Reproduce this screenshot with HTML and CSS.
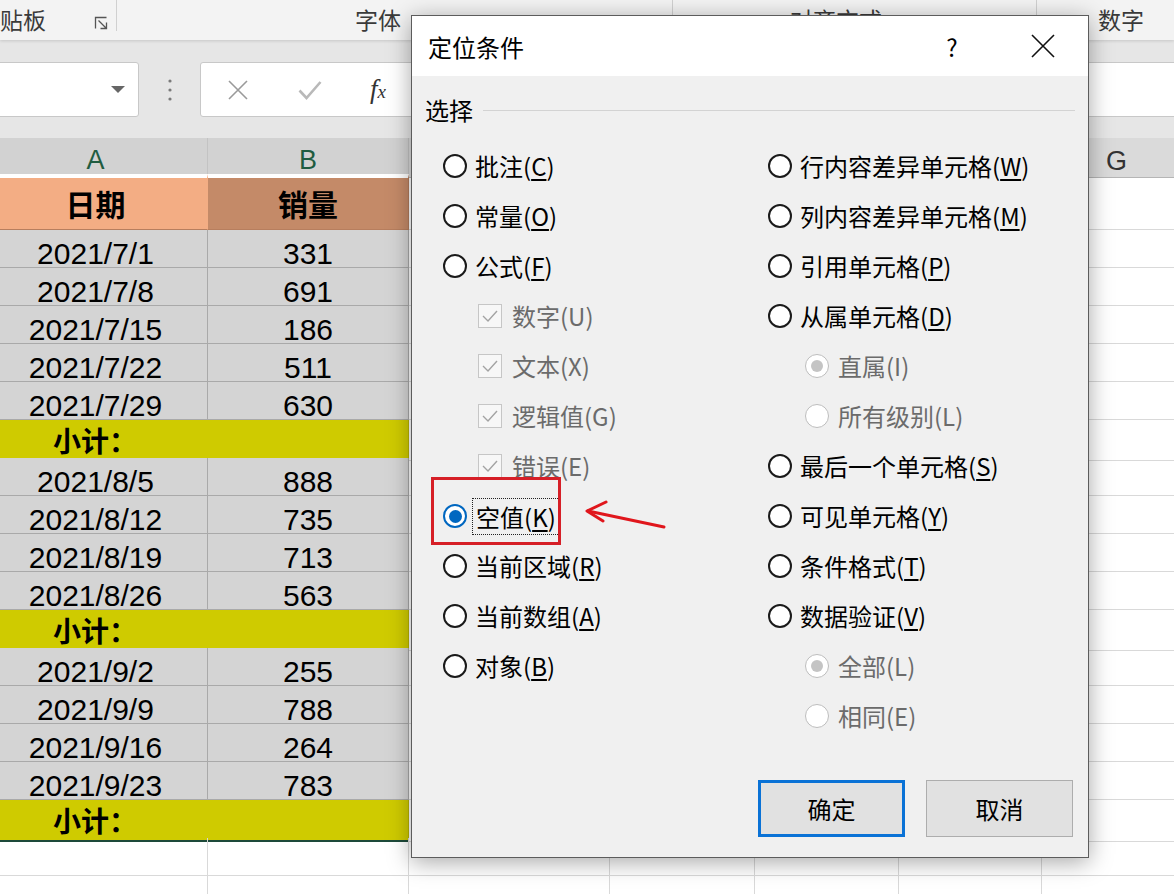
FILE: index.html
```html
<!DOCTYPE html>
<html lang="zh-CN">
<head>
<meta charset="utf-8">
<title>定位条件</title>
<link rel="stylesheet" href="styles.css">
</head>
<body>
<div class="ribbon">
  <div class="rgroup g-clip"><span class="rlabel">贴板</span>
    <svg class="launcher" width="14" height="14" viewBox="0 0 14 14"><path d="M1.5 12.5V1.5H12.5M4.5 4.5L12 12M6.5 12.5H12.5V6.5" fill="none" stroke="#555" stroke-width="1.3"/></svg>
  </div>
  <div class="rgroup g-font"><span class="rlabel">字体</span></div>
  <div class="rgroup g-align"><span class="rlabel">对齐方式</span></div>
  <div class="rgroup g-num"><span class="rlabel">数字</span></div>
</div>

<div class="fbar">
  <div class="namebox"><svg width="14" height="8" viewBox="0 0 14 8"><path d="M0 0H14L7 7Z" fill="#666"/></svg></div>
  <div class="vdots"><svg width="4" height="22" viewBox="0 0 4 22"><circle cx="2" cy="2" r="1.6" fill="#7a7a7a"/><circle cx="2" cy="11" r="1.6" fill="#7a7a7a"/><circle cx="2" cy="20" r="1.6" fill="#7a7a7a"/></svg></div>
  <div class="fbox">
    <svg class="ic-x" width="20" height="20" viewBox="0 0 20 20"><path d="M1 1L19 19M19 1L1 19" stroke="#9a9a9a" stroke-width="1.6"/></svg>
    <svg class="ic-ok" width="24" height="20" viewBox="0 0 24 20"><path d="M1.5 10.5L8.5 18L22.5 2" fill="none" stroke="#b9b9b9" stroke-width="2.6"/></svg>
    <span class="fx">f<span class="fx-x">x</span></span>
  </div>
</div>

<div class="colhead">
  <div class="ch sel">A</div>
  <div class="ch sel">B</div>
  <div class="ch"></div>
  <div class="ch"></div>
  <div class="ch"></div>
  <div class="ch"></div>
  <div class="ch">G</div>
</div>

<div class="sheet">
  <div class="row hdr"><div class="cell h1">日期</div><div class="cell h2">销量</div><div class="cell"></div><div class="cell"></div><div class="cell"></div><div class="cell"></div><div class="cell"></div></div>

  <div class="row"><div class="cell d num">2021/7/1</div><div class="cell d num">331</div><div class="cell"></div><div class="cell"></div><div class="cell"></div><div class="cell"></div><div class="cell"></div></div>
  <div class="row"><div class="cell d num">2021/7/8</div><div class="cell d num">691</div><div class="cell"></div><div class="cell"></div><div class="cell"></div><div class="cell"></div><div class="cell"></div></div>
  <div class="row"><div class="cell d num">2021/7/15</div><div class="cell d num">186</div><div class="cell"></div><div class="cell"></div><div class="cell"></div><div class="cell"></div><div class="cell"></div></div>
  <div class="row"><div class="cell d num">2021/7/22</div><div class="cell d num">511</div><div class="cell"></div><div class="cell"></div><div class="cell"></div><div class="cell"></div><div class="cell"></div></div>
  <div class="row"><div class="cell d num">2021/7/29</div><div class="cell d num">630</div><div class="cell"></div><div class="cell"></div><div class="cell"></div><div class="cell"></div><div class="cell"></div></div>
  <div class="row"><div class="cell sub">小计：</div><div class="cell"></div><div class="cell"></div><div class="cell"></div><div class="cell"></div><div class="cell"></div></div>

  <div class="row"><div class="cell d num">2021/8/5</div><div class="cell d num">888</div><div class="cell"></div><div class="cell"></div><div class="cell"></div><div class="cell"></div><div class="cell"></div></div>
  <div class="row"><div class="cell d num">2021/8/12</div><div class="cell d num">735</div><div class="cell"></div><div class="cell"></div><div class="cell"></div><div class="cell"></div><div class="cell"></div></div>
  <div class="row"><div class="cell d num">2021/8/19</div><div class="cell d num">713</div><div class="cell"></div><div class="cell"></div><div class="cell"></div><div class="cell"></div><div class="cell"></div></div>
  <div class="row"><div class="cell d num">2021/8/26</div><div class="cell d num">563</div><div class="cell"></div><div class="cell"></div><div class="cell"></div><div class="cell"></div><div class="cell"></div></div>
  <div class="row"><div class="cell sub">小计：</div><div class="cell"></div><div class="cell"></div><div class="cell"></div><div class="cell"></div><div class="cell"></div></div>

  <div class="row"><div class="cell d num">2021/9/2</div><div class="cell d num">255</div><div class="cell"></div><div class="cell"></div><div class="cell"></div><div class="cell"></div><div class="cell"></div></div>
  <div class="row"><div class="cell d num">2021/9/9</div><div class="cell d num">788</div><div class="cell"></div><div class="cell"></div><div class="cell"></div><div class="cell"></div><div class="cell"></div></div>
  <div class="row"><div class="cell d num">2021/9/16</div><div class="cell d num">264</div><div class="cell"></div><div class="cell"></div><div class="cell"></div><div class="cell"></div><div class="cell"></div></div>
  <div class="row"><div class="cell d num">2021/9/23</div><div class="cell d num">783</div><div class="cell"></div><div class="cell"></div><div class="cell"></div><div class="cell"></div><div class="cell"></div></div>
  <div class="row"><div class="cell sub last">小计：</div><div class="cell"></div><div class="cell"></div><div class="cell"></div><div class="cell"></div><div class="cell"></div></div>

  <div class="row"><div class="cell"></div><div class="cell"></div><div class="cell"></div><div class="cell"></div><div class="cell"></div><div class="cell"></div><div class="cell"></div></div>
  <div class="row"><div class="cell"></div><div class="cell"></div><div class="cell"></div><div class="cell"></div><div class="cell"></div><div class="cell"></div><div class="cell"></div></div>
</div>

<div class="dialog">
  <div class="titlebar">
    <span class="title">定位条件</span>
    <span class="help">?</span>
    <svg class="close" width="24" height="24" viewBox="0 0 24 24"><path d="M1 1L23 23M23 1L1 23" stroke="#111" stroke-width="1.6"/></svg>
  </div>
  <div class="dbody">
    <div class="legend"><span>选择</span><span class="rule"></span></div>
    <div class="options">
      <div class="col">
        <div class="opt"><span class="radio"></span><span class="lbl">批注(<u>C</u>)</span></div>
        <div class="opt"><span class="radio"></span><span class="lbl">常量(<u>O</u>)</span></div>
        <div class="opt"><span class="radio"></span><span class="lbl">公式(<u>F</u>)</span></div>
        <div class="opt sub-opt"><span class="check"><svg width="22" height="22" viewBox="0 0 22 22"><path d="M4 11L9 16L18 6" fill="none" stroke="#a3a3a3" stroke-width="1.4"/></svg></span><span class="lbl dis">数字(U)</span></div>
        <div class="opt sub-opt"><span class="check"><svg width="22" height="22" viewBox="0 0 22 22"><path d="M4 11L9 16L18 6" fill="none" stroke="#a3a3a3" stroke-width="1.4"/></svg></span><span class="lbl dis">文本(X)</span></div>
        <div class="opt sub-opt"><span class="check"><svg width="22" height="22" viewBox="0 0 22 22"><path d="M4 11L9 16L18 6" fill="none" stroke="#a3a3a3" stroke-width="1.4"/></svg></span><span class="lbl dis">逻辑值(G)</span></div>
        <div class="opt sub-opt"><span class="check"><svg width="22" height="22" viewBox="0 0 22 22"><path d="M4 11L9 16L18 6" fill="none" stroke="#a3a3a3" stroke-width="1.4"/></svg></span><span class="lbl dis">错误(E)</span></div>
        <div class="opt"><span class="radio on"></span><span class="lbl focus">空值(<u>K</u>)</span></div>
        <div class="opt"><span class="radio"></span><span class="lbl">当前区域(<u>R</u>)</span></div>
        <div class="opt"><span class="radio"></span><span class="lbl">当前数组(<u>A</u>)</span></div>
        <div class="opt"><span class="radio"></span><span class="lbl">对象(<u>B</u>)</span></div>
      </div>
      <div class="col">
        <div class="opt"><span class="radio"></span><span class="lbl">行内容差异单元格(<u>W</u>)</span></div>
        <div class="opt"><span class="radio"></span><span class="lbl">列内容差异单元格(<u>M</u>)</span></div>
        <div class="opt"><span class="radio"></span><span class="lbl">引用单元格(<u>P</u>)</span></div>
        <div class="opt"><span class="radio"></span><span class="lbl">从属单元格(<u>D</u>)</span></div>
        <div class="opt sub-radio"><span class="radio dis on"></span><span class="lbl dis">直属(I)</span></div>
        <div class="opt sub-radio"><span class="radio dis"></span><span class="lbl dis">所有级别(L)</span></div>
        <div class="opt"><span class="radio"></span><span class="lbl">最后一个单元格(<u>S</u>)</span></div>
        <div class="opt"><span class="radio"></span><span class="lbl">可见单元格(<u>Y</u>)</span></div>
        <div class="opt"><span class="radio"></span><span class="lbl">条件格式(<u>T</u>)</span></div>
        <div class="opt"><span class="radio"></span><span class="lbl">数据验证(<u>V</u>)</span></div>
        <div class="opt sub-radio"><span class="radio dis on"></span><span class="lbl dis">全部(L)</span></div>
        <div class="opt sub-radio"><span class="radio dis"></span><span class="lbl dis">相同(E)</span></div>
      </div>
    </div>
  </div>
  <div class="dfoot">
    <button class="btn primary">确定</button>
    <button class="btn">取消</button>
  </div>
</div>

<div class="mark-box"></div>
<svg class="mark-arrow" width="100" height="45" viewBox="0 0 100 45">
  <path d="M89 32Q60 26 13 16" fill="none" stroke="#e0161c" stroke-width="3" stroke-linecap="round"/>
  <path d="M31 7L12 16L28 26" fill="none" stroke="#e0161c" stroke-width="3" stroke-linecap="round" stroke-linejoin="round"/>
</svg>
</body>
</html>
```
FILE: styles.css
```css
* { box-sizing: border-box; }

body {
  margin: 0;
  width: 1174px;
  height: 894px;
  overflow: hidden;
  position: relative;
  background: #fff;
  font-family: "Liberation Sans", "Noto Sans CJK SC", sans-serif;
  color: #000;
}

/* ---------- ribbon ---------- */
.ribbon {
  height: 40px;
  background: #f3f3f3;
  display: flex;
  align-items: flex-start;
  position: relative;
  z-index: 1;
  box-shadow: 0 1px 3px rgba(0, 0, 0, 0.14);
  font-family: "Noto Sans CJK SC", sans-serif;
  font-size: 23px;
  line-height: 28px;
  color: #3a3a3a;
}
.rgroup {
  height: 40px;
  padding-top: 5px;
  display: flex;
  align-items: flex-start;
  border-right: 1px solid #d0d0d0;
}
.g-clip {
  width: 117px;
  height: 31px;
  justify-content: space-between;
  padding-right: 8px;
}
.launcher { margin-top: 11px; }
.g-font { width: 556px; padding-left: 238px; }
.g-align { width: 364px; padding-left: 117px; }
.g-num { flex: 1; border-right: 0; padding-left: 61px; }

/* ---------- formula bar ---------- */
.fbar {
  height: 98px;
  background: #e6e6e6;
  display: flex;
  align-items: flex-start;
  padding-top: 22px;
}
.namebox {
  width: 143px;
  margin-left: -4px;
  height: 55px;
  background: #fff;
  border: 1px solid #c8c8c8;
  border-radius: 3px;
  display: flex;
  align-items: center;
  justify-content: flex-end;
  padding-right: 13px;
}
.vdots {
  width: 61px;
  height: 55px;
  display: flex;
  align-items: center;
  justify-content: center;
}
.fbox {
  flex: 1;
  margin-right: -10px;
  height: 55px;
  background: #fff;
  border: 1px solid #c8c8c8;
  border-radius: 3px;
  display: flex;
  align-items: center;
}
.ic-x { margin-left: 27px; }
.ic-ok { margin-left: 50px; }
.fx {
  margin-left: 48px;
  font-family: "Liberation Serif", serif;
  font-style: italic;
  font-size: 27px;
  color: #333;
  line-height: 1;
}
.fx-x { font-size: 19px; }

/* ---------- column headers ---------- */
.colhead {
  display: grid;
  grid-template-columns: 224px 201px 201px 145px 144px 143px 150px;
  margin-left: -16px;
  height: 36px;
}
.ch {
  background: #dadada;
  border-right: 1px solid #c3c3c3;
  border-bottom: 1px solid #b5b5b5;
  display: flex;
  align-items: center;
  justify-content: center;
  padding-top: 7px;
  font-size: 27px;
  color: #333;
}
.ch.sel {
  background: #d2d2d2;
  color: #1f5c40;
  border-bottom: 2px solid #1e5b3d;
}

/* ---------- sheet ---------- */
.sheet { margin-left: -16px; }
.row {
  display: grid;
  grid-template-columns: 224px 201px 201px 145px 144px 143px 150px;
  height: 38px;
}
.row.hdr { height: 56px; }
.cell {
  border-right: 1px solid #d9d9d9;
  border-bottom: 1px solid #d9d9d9;
}
.h1, .h2 {
  display: flex;
  align-items: center;
  justify-content: center;
  font-family: "Noto Sans CJK SC", sans-serif;
  font-weight: bold;
  font-size: 30px;
  padding-bottom: 2px;
  border-bottom-color: #b77e5e;
}
.h1 { background: #f3ad84; border-right-color: #f3ad84; border-top: 4px solid #fff; }
.h2 { background: #c48a68; border-right-color: #b27b5c; border-top: 4px solid #fff; }

.cell.d {
  background: #d4d4d4;
  border-right-color: #a9a9a9;
  border-bottom-color: #a9a9a9;
}
.num {
  display: flex;
  justify-content: center;
  align-items: flex-end;
  font-size: 30px;
  line-height: 27px;
}
.sub {
  grid-column: span 2;
  background: #cfcb00;
  border-right-color: #b7b400;
  border-bottom-color: #b7b400;
  display: flex;
  align-items: center;
  padding-left: 69px;
  font-family: "Noto Sans CJK SC", sans-serif;
  font-weight: bold;
  font-size: 28px;
}
.sub.last { border-bottom: 2px solid #1d4a3a; }

/* ---------- dialog ---------- */
.dialog {
  position: absolute;
  left: 411px;
  top: 15px;
  width: 678px;
  height: 843px;
  z-index: 5;
  border: 1px solid #5c5c5c;
  background: #f0f0f0;
  box-shadow: 0 4px 22px rgba(0, 0, 0, 0.35);
  display: flex;
  flex-direction: column;
  font-family: "Noto Sans CJK SC", sans-serif;
  font-size: 24px;
  color: #000;
}
.titlebar {
  height: 60px;
  flex: none;
  background: #fff;
  display: flex;
  align-items: center;
  padding-left: 16px;
  padding-right: 33px;
}
.title { flex: 1; }
.help { width: 24px; text-align: center; margin-right: 67px; }

.dbody {
  flex: 1;
  padding: 0 13px;
}
.legend {
  margin-top: 18px;
  height: 32px;
  display: flex;
  align-items: center;
  line-height: 32px;
}
.rule {
  flex: 1;
  height: 1px;
  background: #d3d3d3;
  margin-left: 10px;
}
.options {
  margin-top: 15px;
  padding-left: 18px;
  display: grid;
  grid-template-columns: 325px 1fr;
}
.col { display: flex; flex-direction: column; }
.opt {
  height: 50px;
  display: flex;
  align-items: center;
  line-height: 32px;
}
.radio {
  flex: none;
  width: 24px;
  height: 24px;
  border-radius: 50%;
  border: 2px solid #1a1a1a;
  background: #fff;
  display: flex;
  align-items: center;
  justify-content: center;
}
.radio.on::after {
  content: "";
  width: 13px;
  height: 13px;
  border-radius: 50%;
  background: #0067c0;
}
.radio.on { border-color: #0067c0; }
.radio.dis { border: 1.5px solid #bdbdbd; }
.radio.dis.on::after { background: #c4c4c4; width: 12px; height: 12px; }
.lbl { margin-left: 8px; }
.lbl u { text-underline-offset: 3px; }
.lbl.dis { color: #6b6b6b; }
.sub-opt { padding-left: 35px; }
.sub-opt .lbl { margin-left: 10px; }
.sub-radio { padding-left: 37px; }
.sub-radio .lbl { margin-left: 9px; }
.check {
  width: 24px;
  height: 24px;
  border: 1px solid #c6c6c6;
  background: #f7f7f7;
  display: flex;
  align-items: center;
  justify-content: center;
}
.lbl.focus {
  margin-left: 5px;
  padding: 2px 3px 1px;
  border: 1px dotted #222;
}

.dfoot {
  flex: none;
  display: flex;
  justify-content: flex-end;
  gap: 21px;
  padding: 0 15px 20px 0;
}
.btn {
  width: 147px;
  height: 57px;
  background: #e1e1e1;
  border: 1px solid #adadad;
  font-family: "Noto Sans CJK SC", sans-serif;
  font-size: 24px;
  color: #000;
  padding: 0;
}
.btn.primary { border: 3px solid #0a72d6; }

/* ---------- annotation ---------- */
.mark-box {
  position: absolute;
  left: 431px;
  top: 477px;
  width: 130px;
  height: 68px;
  border: 3px solid #d61f27;
  z-index: 6;
}
.mark-arrow {
  position: absolute;
  left: 575px;
  top: 495px;
  z-index: 6;
}
```
